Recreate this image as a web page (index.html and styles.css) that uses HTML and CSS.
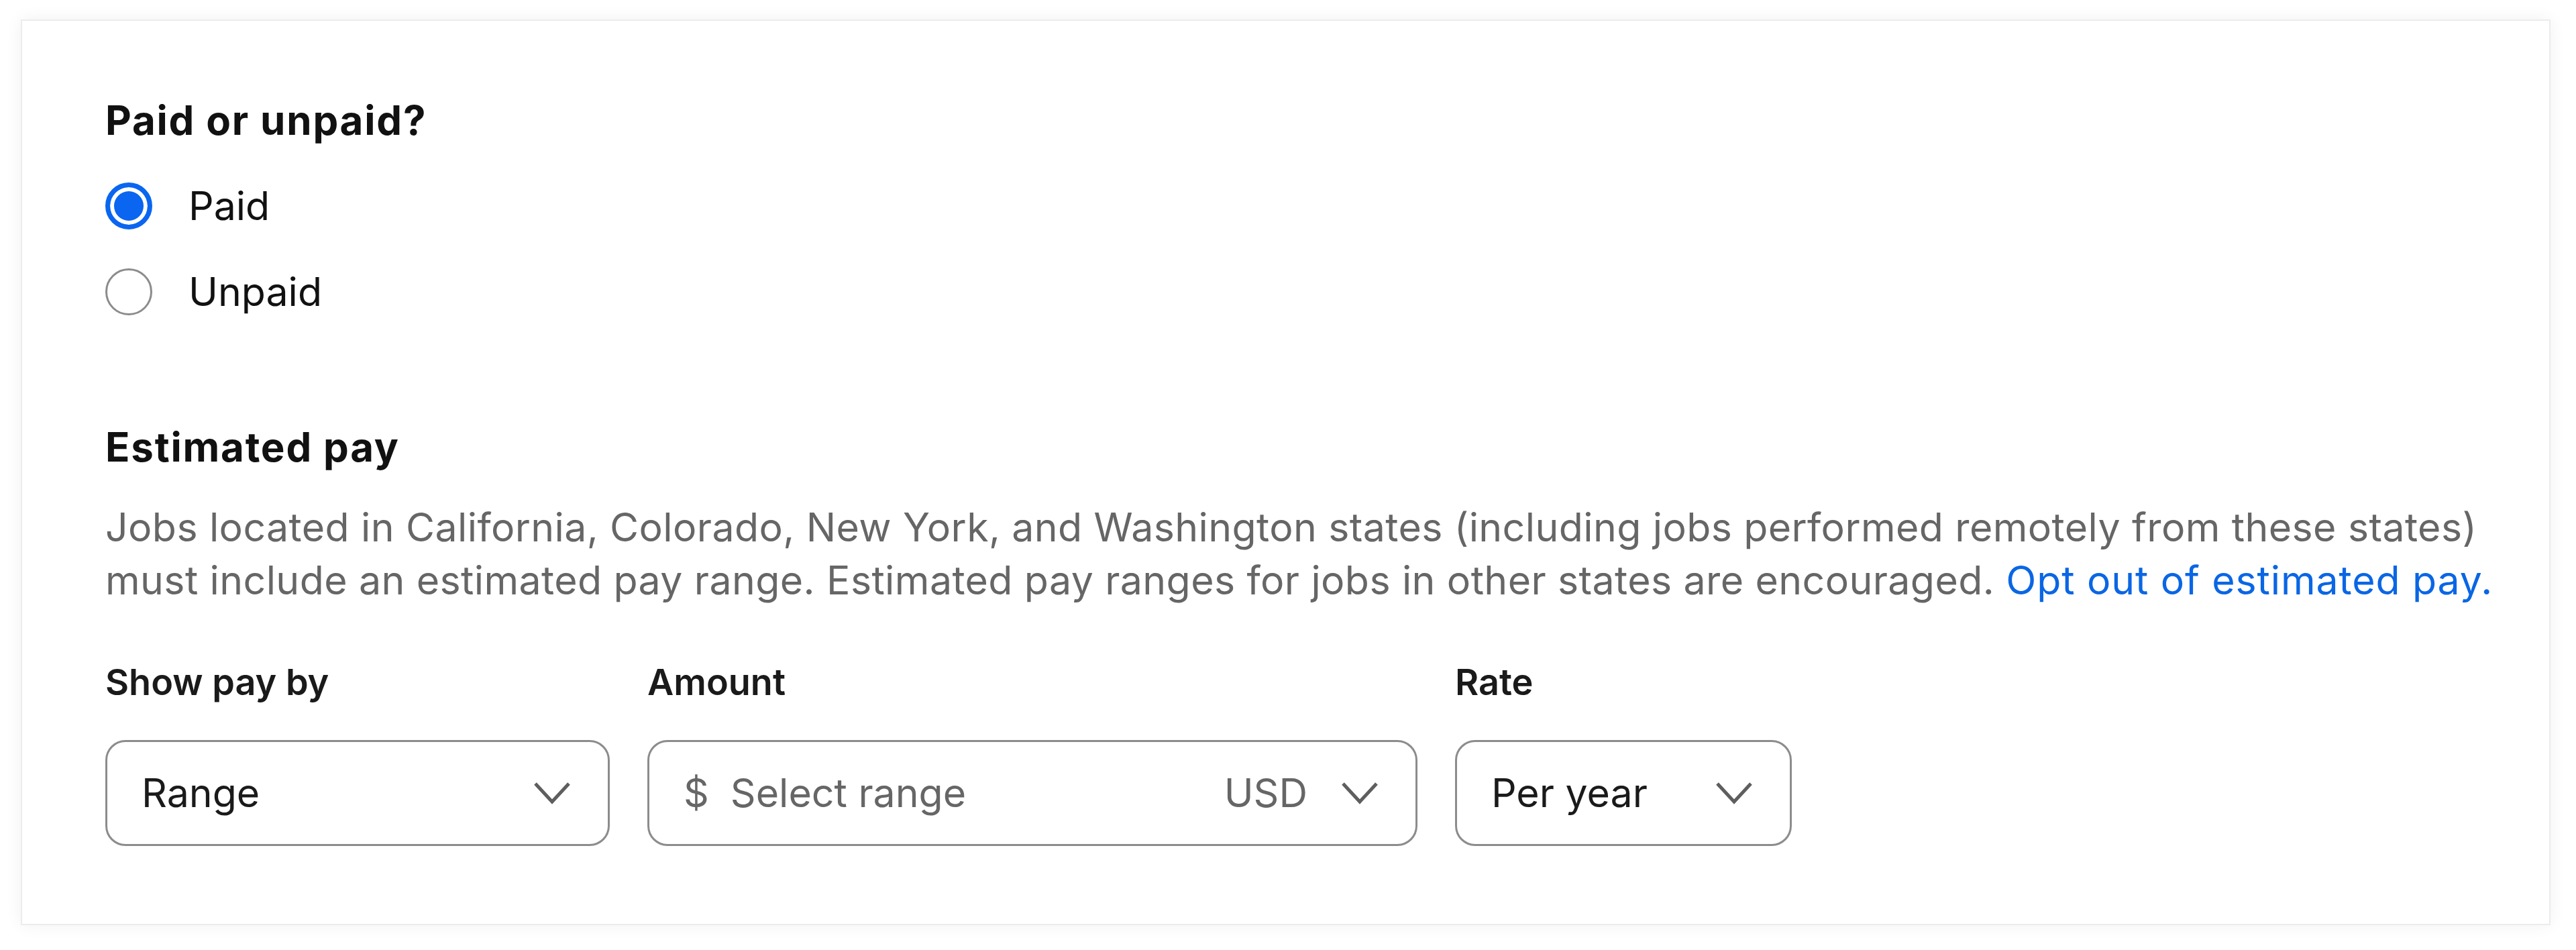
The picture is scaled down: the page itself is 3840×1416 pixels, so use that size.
FILE: index.html
```html
<!DOCTYPE html>
<html lang="en">
<head>
    <meta charset="UTF-8">
    <meta name="viewport" content="width=device-width, initial-scale=1.0">
    <title>Job pay details</title>
    <link rel="stylesheet" href="styles.css">
</head>
<body>
    <main class="card">
        <!-- Tipo de pago -->
        <fieldset class="pay-type">
            <legend class="section-title">Paid or unpaid?</legend>
            <label class="radio">
                <input type="radio" name="paid" value="paid" checked>
                <span>Paid</span>
            </label>
            <label class="radio">
                <input type="radio" name="paid" value="unpaid">
                <span>Unpaid</span>
            </label>
        </fieldset>

        <!-- Salario estimado -->
        <section class="estimate">
            <h2 class="section-title">Estimated pay</h2>
            <p class="hint">
                Jobs located in California, Colorado, New York, and Washington states (including jobs performed remotely from these states)
                must include an estimated pay range. Estimated pay ranges for jobs in other states are encouraged.
                <a href="#">Opt out of estimated pay.</a>
            </p>

            <div class="fields">
                <div class="field">
                    <span class="field-label">Show pay by</span>
                    <div class="select select-by">
                        <span class="value">Range</span>
                        <svg class="chevron" viewBox="0 0 56 36"><polyline points="3,4 28,31 53,4"/></svg>
                    </div>
                </div>
                <div class="field">
                    <span class="field-label">Amount</span>
                    <div class="select select-amount">
                        <span class="currency">$</span>
                        <span class="placeholder">Select range</span>
                        <span class="code">USD</span>
                        <svg class="chevron" viewBox="0 0 56 36"><polyline points="3,4 28,31 53,4"/></svg>
                    </div>
                </div>
                <div class="field">
                    <span class="field-label">Rate</span>
                    <div class="select select-rate">
                        <span class="value">Per year</span>
                        <svg class="chevron" viewBox="0 0 56 36"><polyline points="3,4 28,31 53,4"/></svg>
                    </div>
                </div>
            </div>
        </section>
    </main>
</body>
</html>
```

FILE: styles.css
```css
body {
    margin: 0;
    padding: 29px 38px 38px 31px;
    background: #fff;
    font-family: Inter, "Liberation Sans", sans-serif;
    font-size: 59px;
    color: #1a1a1a;
}
.card {
    border: 2px solid #ececec;
    box-shadow: 0 0 24px rgba(0, 0, 0, 0.06);
    background: #fff;
    padding: 112px 20px 116px 124px;
}
.section-title {
    margin: 0;
    padding: 0;
    font-size: 60px;
    font-weight: 700;
    letter-spacing: 1.8px;
    line-height: 72px;
    color: #111;
}
.pay-type {
    border: 0;
    margin: 0;
    padding: 0;
    display: flex;
    flex-direction: column;
    gap: 56px;
}
.pay-type legend {
    margin-bottom: 56px;
}
.radio {
    display: flex;
    align-items: center;
    gap: 54px;
    line-height: 72px;
    color: #111;
}
.radio input {
    appearance: none;
    margin: 0;
    width: 70px;
    height: 70px;
    border-radius: 50%;
    border: 3px solid #8c8c8c;
    background: #fff;
}
.radio input:checked {
    border: 7px solid #0a66f0;
    background: #0a66f0;
    box-shadow: inset 0 0 0 6px #fff;
}
.estimate {
    margin-top: 159px;
}
.hint {
    margin: 44px 0 0;
    line-height: 79px;
    letter-spacing: 0.4px;
    color: #666;
}
.hint a {
    color: #0a66e4;
    letter-spacing: 0.9px;
    text-decoration: none;
}
.fields {
    display: flex;
    gap: 56px;
    margin-top: 77px;
}
.field {
    display: flex;
    flex-direction: column;
    gap: 50px;
}
.field-label {
    font-size: 54px;
    font-weight: 600;
    line-height: 72px;
}
.select {
    box-sizing: border-box;
    height: 158px;
    border: 3px solid #8c8c8c;
    border-radius: 30px;
    display: flex;
    align-items: center;
    padding: 0 55px 0 51px;
    line-height: 72px;
}
.select-by { width: 752px; }
.select-amount { width: 1148px; color: #666; }
.select-rate { width: 502px; }
.select .value {
    flex: 1;
}
.currency {
    margin-right: 32px;
}
.placeholder {
    flex: 1;
}
.code {
    margin-right: 50px;
}
.chevron {
    width: 56px;
    height: 36px;
    fill: none;
    stroke: #5e5e5e;
    stroke-width: 5;
}
```
